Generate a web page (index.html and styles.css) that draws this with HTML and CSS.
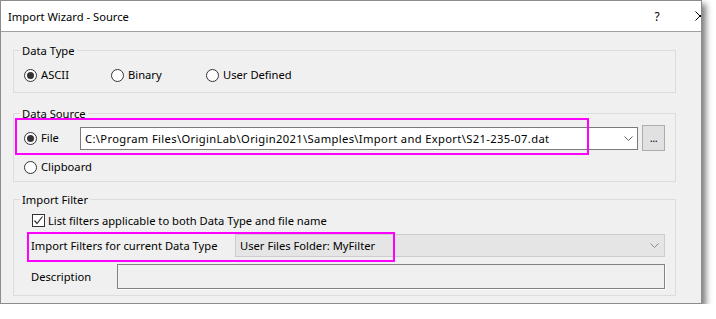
FILE: index.html
```html
<!DOCTYPE html>
<html>
<head>
<meta charset="utf-8">
<link rel="stylesheet" href="styles.css">
</head>
<body>
<div class="window">
  <div class="titlebar">
    <span class="title">Import Wizard - Source</span>
    <span class="help">?</span>
    <span class="close"><svg width="10" height="10" viewBox="0 0 10 10"><path d="M0.5 0.5 L9.5 9.5 M9.5 0.5 L0.5 9.5" stroke="#000" stroke-width="1" fill="none"/></svg></span>
  </div>
  <div class="content">
    <div class="group g-type">
      <span class="legend">Data Type</span>
      <div class="radio-row">
        <span class="opt"><span class="radio on"></span>ASCII</span>
        <span class="opt"><span class="radio"></span>Binary</span>
        <span class="opt"><span class="radio"></span>User Defined</span>
      </div>
    </div>
    <div class="group g-source">
      <span class="legend">Data Source</span>
      <div class="file-row">
        <span class="opt file-opt"><span class="radio on"></span>File</span>
        <div class="combo file-combo">
          <span class="combo-text path-text">C:\Program Files\OriginLab\Origin2021\Samples\Import and Export\S21-235-07.dat</span>
          <svg class="chev" width="9" height="5" viewBox="0 0 9 5"><path d="M0.5 0.5 L4.5 4.5 L8.5 0.5" stroke="#606060" stroke-width="1" fill="none"/></svg>
        </div>
        <span class="browse">...</span>
      </div>
      <span class="opt clip-opt"><span class="radio"></span>Clipboard</span>
      <div class="highlight hl-file"></div>
    </div>
    <div class="group g-filter">
      <span class="legend">Import Filter</span>
      <div class="check-row">
        <span class="checkbox"><svg width="11" height="11" viewBox="0 0 11 11"><path d="M1.5 5.5 L4 8.5 L9.5 1.5" stroke="#333" stroke-width="1.2" fill="none"/></svg></span>
        <span>List filters applicable to both Data Type and file name</span>
      </div>
      <div class="field-row filter-row">
        <span class="field-label lbl-filter">Import Filters for current Data Type</span>
        <div class="combo disabled filter-combo">
          <span class="combo-text">User Files Folder: MyFilter</span>
          <svg class="chev" width="9" height="5" viewBox="0 0 9 5"><path d="M0.5 0.5 L4.5 4.5 L8.5 0.5" stroke="#8a8a8a" stroke-width="1" fill="none"/></svg>
        </div>
      </div>
      <div class="field-row desc-row">
        <span class="field-label lbl-desc">Description</span>
        <div class="textbox"></div>
      </div>
      <div class="highlight hl-filter"></div>
    </div>
  </div>
</div>
</body>
</html>
```
FILE: styles.css
```css
body {
  margin: 0;
  background: #ffffff;
  font-family: "Noto Sans", "Liberation Sans", sans-serif;
  font-size: 11.2px;
  color: #000;
}

.window {
  width: 702px;
  height: 304px;
  box-sizing: border-box;
  border: 1px solid #8c8c8c;
  background: #f0f0f0;
  box-shadow: 4px 4px 6px rgba(0, 0, 0, 0.5);
  display: flex;
  flex-direction: column;
  overflow: hidden;
}

.titlebar {
  height: 30px;
  flex-shrink: 0;
  background: #fff;
  border-bottom: 1px solid #a0a0a0;
  display: flex;
  align-items: center;
}

.title {
  padding-left: 7px;
  flex: 1;
}

.help {
  width: 12px;
  text-align: center;
  margin-right: 30px;
  font-size: 12px;
}

.close {
  width: 14px;
  display: flex;
  justify-content: center;
  margin-right: -6px;
  flex-shrink: 0;
}

.content {
  padding: 18px 0 0 12px;
  display: flex;
  flex-direction: column;
}

.group {
  width: 663px;
  box-sizing: border-box;
  border: 1px solid #dcdcdc;
  padding: 0 10px;
  position: relative;
  display: flex;
  flex-direction: column;
}

.legend {
  align-self: flex-start;
  margin: -8px 0 0 -4px;
  padding: 0 2px;
  background: #f0f0f0;
  line-height: 16px;
}

.g-type { padding-bottom: 9px; }
.g-source { margin-top: 20px; padding-bottom: 6px; }
.g-filter { margin-top: 17px; padding-bottom: 6px; }

.opt {
  display: flex;
  align-items: center;
  line-height: 16px;
  white-space: nowrap;
}

.radio {
  width: 13px;
  height: 13px;
  box-sizing: border-box;
  border: 1px solid #333;
  border-radius: 50%;
  background: #fff;
  margin-right: 4px;
  display: inline-flex;
  align-items: center;
  justify-content: center;
  flex-shrink: 0;
}

.radio.on::after {
  content: "";
  width: 7px;
  height: 7px;
  border-radius: 50%;
  background: #333;
}

.radio-row {
  margin-top: 8px;
  height: 16px;
  display: grid;
  grid-template-columns: 87px 95px auto;
}

.file-row {
  margin-top: 3px;
  height: 26px;
  display: flex;
  align-items: center;
}

.file-opt {
  width: 56px;
  flex-shrink: 0;
}

.combo {
  height: 23px;
  box-sizing: border-box;
  border: 1px solid #7a7a7a;
  background: #fff;
  padding: 0 4px 0 4px;
  display: flex;
  align-items: center;
  justify-content: space-between;
  flex-shrink: 0;
  white-space: nowrap;
}

.file-combo { width: 558px; }

.path-text { letter-spacing: 0.35px; }

.combo.disabled {
  background: #e5e5e5;
  border-color: #cccccc;
}

.filter-combo { width: 430px; padding-right: 5px; }

.browse {
  width: 23px;
  height: 26px;
  margin-left: 4px;
  box-sizing: border-box;
  border: 1px solid #adadad;
  background: #e1e1e1;
  display: flex;
  align-items: center;
  justify-content: center;
  font-size: 11px;
  letter-spacing: -0.5px;
  padding-bottom: 2px;
  flex-shrink: 0;
}

.clip-opt {
  margin-top: 8px;
  height: 16px;
}

.check-row {
  margin-top: 4px;
  height: 16px;
  display: flex;
  align-items: center;
  white-space: nowrap;
}

.checkbox {
  width: 13px;
  height: 13px;
  box-sizing: border-box;
  border: 1px solid #333;
  background: #fff;
  margin: 0 3px 0 8px;
  display: flex;
  align-items: center;
  justify-content: center;
}

.field-row {
  display: flex;
  align-items: center;
}

.filter-row { margin-top: 6px; height: 23px; }
.desc-row { margin-top: 7px; height: 25px; }

.field-label {
  margin-left: 7px;
  white-space: nowrap;
  flex-shrink: 0;
}

.lbl-filter { width: 204px; }
.lbl-desc { width: 86px; }

.textbox {
  width: 548px;
  height: 25px;
  box-sizing: border-box;
  border: 1px solid #828282;
  background: #f0f0f0;
  box-shadow: 1px 1px 0 #ffffff;
}

.highlight {
  position: absolute;
  box-sizing: border-box;
  border: 2px solid #ff00ff;
  pointer-events: none;
}

.hl-file { left: 1px; top: 4px; width: 574px; height: 37px; }
.hl-filter { left: 13px; top: 32px; width: 368px; height: 30px; }
```
